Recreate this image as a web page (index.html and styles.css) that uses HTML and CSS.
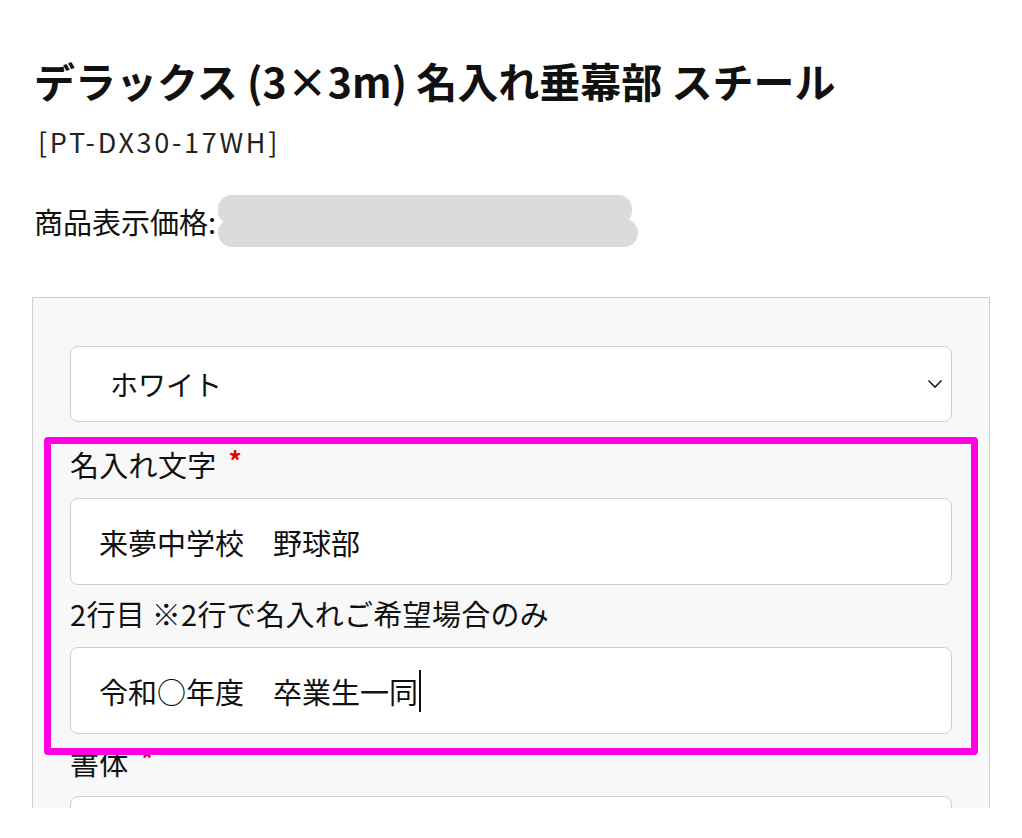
FILE: index.html
```html
<!DOCTYPE html>
<html lang="ja">

<head>
    <meta charset="UTF-8" />
    <meta name="viewport" content="width=device-width, initial-scale=1.0" />
    <title>デラックス (3×3m) 名入れ垂幕部 スチール</title>
    <link rel="stylesheet" href="styles.css">
</head>

<body>
    <div class="page">
        <h1 class="product-title">デラックス (3×3m) 名入れ垂幕部 スチール</h1>
        <p class="product-code">[PT-DX30-17WH]</p>

        <div class="price-row">
            <span class="price-label">商品表示価格:</span>
            <span class="price-hidden">
                <span class="pill pill-top"></span>
                <span class="pill pill-bottom"></span>
            </span>
        </div>

        <div class="options">
            <div class="select">
                <span>ホワイト</span>
                <svg class="chevron" width="16" height="10" viewBox="0 0 16 10">
                    <path d="M1.5 1.5 L8 8 L14.5 1.5" fill="none" stroke="#222" stroke-width="1.6" />
                </svg>
            </div>

            <div class="field-group">
                <div class="field">
                    <label class="field-label">名入れ文字<span class="req">*</span></label>
                    <div class="input">来夢中学校　野球部</div>
                </div>
                <div class="field">
                    <label class="field-label">2行目 ※2行で名入れご希望場合のみ</label>
                    <div class="input">令和○年度　卒業生一同<span class="caret"></span></div>
                </div>
            </div>

            <div class="field">
                <label class="field-label">書体<span class="req">*</span></label>
                <div class="input"></div>
            </div>
        </div>
    </div>
</body>

</html>
```

FILE: styles.css
```css
* {
    box-sizing: border-box;
}

body {
    margin: 0;
    background: #fff;
    color: #111;
    font-family: "Noto Sans CJK JP", "Noto Sans", sans-serif;
}

.page {
    height: 808px;
    overflow: hidden;
    padding: 0 32px 0 32px;
}

.product-title {
    margin: 50px 0 0 2px;
    font-size: 41px;
    line-height: 60px;
    font-weight: 700;
}

.product-code {
    margin: 12px 0 0 6px;
    font-size: 27px;
    line-height: 40px;
    color: #222;
    letter-spacing: 2.7px;
}

.price-row {
    display: flex;
    align-items: center;
    margin: 33px 0 0 2px;
    height: 52px;
}

.price-label {
    font-size: 29px;
}

.price-hidden {
    display: flex;
    flex-direction: column;
    margin-left: 2px;
}

.pill {
    display: block;
    background: #dcdadd;
    border-radius: 14px;
}

.pill-top {
    width: 414px;
    height: 30px;
}

.pill-bottom {
    width: 420px;
    height: 28px;
    margin-top: -6px;
}

.options {
    margin-top: 50px;
    width: 958px;
    background: #f8f8f8;
    border: 1.5px solid #cfcfcf;
    padding: 48px 37px 0;
    height: 600px;
}

.select {
    display: flex;
    align-items: center;
    justify-content: space-between;
    height: 76px;
    padding: 0 8px 0 39px;
    background: #fff;
    border: 1.5px solid #cfcfcf;
    border-radius: 8px;
    font-size: 28px;
    margin-bottom: 18px;
}

.chevron {
    display: block;
}

.field-group {
    position: relative;
    margin-bottom: 4px;
}

/* highlight frame drawn over the name fields */
.field-group::before {
    content: "";
    position: absolute;
    top: -3px;
    left: -26px;
    right: -26px;
    bottom: -21px;
    border: 7px solid #ff00e1;
    border-radius: 4px;
    pointer-events: none;
}

.field-group .field:last-child .input {
    margin-bottom: 0;
}

.field-label {
    display: block;
    font-size: 29px;
    line-height: 40px;
    margin-bottom: 14px;
    letter-spacing: 0.3px;
}

.req {
    color: #e60000;
    font-size: 26px;
    font-weight: 700;
    margin-left: 12px;
    vertical-align: 6px;
}

.input {
    display: flex;
    align-items: center;
    height: 87px;
    padding: 0 28px;
    background: #fff;
    border: 1.5px solid #cfcfcf;
    border-radius: 8px;
    font-size: 29px;
    margin-bottom: 8px;
}

.caret {
    display: inline-block;
    width: 1.5px;
    height: 42px;
    margin-left: 1px;
    background: #111;
}
```
